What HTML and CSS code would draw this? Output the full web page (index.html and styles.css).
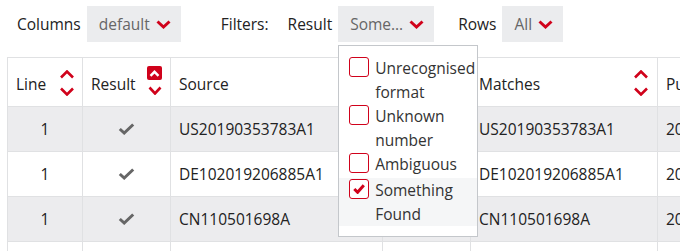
FILE: index.html
```html
<!DOCTYPE html>
<html lang="en">
  <head>
    <meta charset="UTF-8" />
    <meta name="viewport" content="width=device-width, initial-scale=1.0" />
    <title>Results</title>
    <link rel="stylesheet" href="styles.css">
  </head>
  <body>
    <div class="toolbar">
      <div class="group">
        <span class="label">Columns</span>
        <button class="select">default
          <svg class="chev" width="15" height="9" viewBox="0 0 15 9"><path d="M1.5 1.5 L7.5 7 L13.5 1.5" /></svg>
        </button>
      </div>

      <span class="label filters">Filters:</span>

      <div class="group result-filter">
        <span class="label">Result</span>
        <div class="dropdown">
          <button class="select">Some…
            <svg class="chev" width="15" height="9" viewBox="0 0 15 9"><path d="M1.5 1.5 L7.5 7 L13.5 1.5" /></svg>
          </button>
          <div class="menu">
            <label class="option">
              <span class="box"></span>
              <span>Unrecognised format</span>
            </label>
            <label class="option">
              <span class="box"></span>
              <span>Unknown number</span>
            </label>
            <label class="option">
              <span class="box"></span>
              <span>Ambiguous</span>
            </label>
            <label class="option hover">
              <span class="box">
                <svg width="12" height="10" viewBox="0 0 12 10"><path d="M1.3 5 L4.6 8.3 L10.8 1.3" /></svg>
              </span>
              <span>Something Found</span>
            </label>
          </div>
        </div>
      </div>

      <div class="group rows">
        <span class="label">Rows</span>
        <button class="select">All
          <svg class="chev" width="15" height="9" viewBox="0 0 15 9"><path d="M1.5 1.5 L7.5 7 L13.5 1.5" /></svg>
        </button>
      </div>
    </div>

    <table class="results">
      <colgroup>
        <col class="c-line" />
        <col class="c-result" />
        <col class="c-source" />
        <col class="c-type" />
        <col class="c-matches" />
        <col class="c-pub" />
      </colgroup>
      <thead>
        <tr>
          <th>
            <div class="head">Line
              <span class="sort">
                <svg width="16" height="9" viewBox="0 0 16 9"><path d="M2 7.5 L8 1.5 L14 7.5" /></svg>
                <svg width="16" height="9" viewBox="0 0 16 9"><path d="M2 1.5 L8 7.5 L14 1.5" /></svg>
              </span>
            </div>
          </th>
          <th>
            <div class="head">Result
              <span class="sort active">
                <span class="on"><svg width="11" height="7" viewBox="0 0 11 7"><path d="M1.5 5.8 L5.5 1.8 L9.5 5.8" /></svg></span>
                <svg width="14" height="9" viewBox="0 0 14 9"><path d="M1.5 1.5 L7 7.5 L12.5 1.5" /></svg>
              </span>
            </div>
          </th>
          <th><div class="head">Source</div></th>
          <th></th>
          <th>
            <div class="head">Matches
              <span class="sort">
                <svg width="16" height="9" viewBox="0 0 16 9"><path d="M2 7.5 L8 1.5 L14 7.5" /></svg>
                <svg width="16" height="9" viewBox="0 0 16 9"><path d="M2 1.5 L8 7.5 L14 1.5" /></svg>
              </span>
            </div>
          </th>
          <th><div class="head">Publication date</div></th>
        </tr>
      </thead>
      <tbody>
        <tr>
          <td class="num">1</td>
          <td class="ok"><svg width="17" height="12" viewBox="0 0 17 12"><path d="M1.8 6 L6.2 10 L15.2 1.5" /></svg></td>
          <td>US20190353783A1</td>
          <td></td>
          <td>US20190353783A1</td>
          <td>2019-11-21</td>
        </tr>
        <tr>
          <td class="num">1</td>
          <td class="ok"><svg width="17" height="12" viewBox="0 0 17 12"><path d="M1.8 6 L6.2 10 L15.2 1.5" /></svg></td>
          <td>DE102019206885A1</td>
          <td></td>
          <td>DE102019206885A1</td>
          <td>2019-11-21</td>
        </tr>
        <tr>
          <td class="num">1</td>
          <td class="ok"><svg width="17" height="12" viewBox="0 0 17 12"><path d="M1.8 6 L6.2 10 L15.2 1.5" /></svg></td>
          <td>CN110501698A</td>
          <td></td>
          <td>CN110501698A</td>
          <td>2019-11-26</td>
        </tr>
        <tr>
          <td class="num">2</td>
          <td class="ok"><svg width="17" height="12" viewBox="0 0 17 12"><path d="M1.8 6 L6.2 10 L15.2 1.5" /></svg></td>
          <td>EP3570291A1</td>
          <td></td>
          <td>EP3570291A1</td>
          <td>2019-11-20</td>
        </tr>
      </tbody>
    </table>
  </body>
</html>
```

FILE: styles.css
```css
html {
  overflow: hidden;
}
body {
  margin: 0;
  font-family: "Open Sans", Arial, sans-serif;
  font-size: 15.5px;
  color: #222;
  background: white;
}
.toolbar {
  display: flex;
  align-items: center;
  padding: 6px 0 0 17px;
  height: 36px;
}
.group {
  display: flex;
  align-items: center;
  gap: 6px;
}
.filters {
  margin-left: 40px;
}
.result-filter {
  margin-left: 19px;
}
.rows {
  margin-left: 24px;
}
.select {
  display: flex;
  align-items: center;
  gap: 6px;
  height: 36px;
  padding: 0 10px 0 12px;
  border: none;
  border-radius: 0;
  background-color: #ebecee;
  color: #666;
  font: inherit;
  cursor: pointer;
}
.chev path {
  fill: none;
  stroke: #d0021b;
  stroke-width: 3;
}
.dropdown {
  position: relative;
}
.menu {
  position: absolute;
  top: calc(100% + 3px);
  left: 0;
  width: 140px;
  box-sizing: border-box;
  padding: 10px 0;
  background: white;
  border: 1px solid #c4c7cb;
  z-index: 10;
}
.option {
  display: flex;
  gap: 6px;
  min-height: 26px;
  padding: 0 4px 0 10px;
  line-height: 24px;
  color: #333;
}
.option.hover {
  background-color: #f5f6f7;
}
.box {
  flex: none;
  display: flex;
  align-items: center;
  justify-content: center;
  width: 20px;
  height: 20px;
  margin-top: 1px;
  box-sizing: border-box;
  border: 1.5px solid #d0021b;
  border-radius: 3px;
  background: white;
}
.box path {
  fill: none;
  stroke: #d0021b;
  stroke-width: 3;
}
.results {
  margin: 15px 0 0 7px;
  border-collapse: collapse;
  table-layout: fixed;
  width: 850px;
}
.c-line { width: 75px; }
.c-result { width: 88px; }
.c-source { width: 212px; }
.c-type { width: 88px; }
.c-matches { width: 187px; }
.c-pub { width: 200px; }
.results th,
.results td {
  border: 1px solid #e0e1e3;
  padding: 0 8px;
  text-align: left;
  white-space: nowrap;
  overflow: hidden;
}
.results th {
  height: 48px;
  font-weight: normal;
}
.head {
  display: flex;
  align-items: center;
  justify-content: space-between;
  padding-top: 3px;
}
.results th:first-child .head {
  margin-right: -1px;
}
.sort {
  display: flex;
  flex-direction: column;
  align-items: center;
  gap: 8px;
  margin-top: -2px;
}
.sort path {
  fill: none;
  stroke: #d0021b;
  stroke-width: 2.6;
}
.sort.active {
  gap: 6px;
  margin-top: -6px;
}
.sort .on {
  display: flex;
  align-items: center;
  justify-content: center;
  width: 15px;
  height: 14px;
  border-radius: 2px;
  background-color: #d0021b;
}
.sort .on path {
  stroke: white;
  stroke-width: 2.4;
}
.results td {
  height: 44px;
}
.results tbody tr:nth-child(odd) {
  background-color: #ececee;
}
.results td.num,
.results td.ok {
  text-align: center;
}
.ok svg {
  display: block;
  margin: 0 auto;
}
.ok path {
  fill: none;
  stroke: #666;
  stroke-width: 3;
}
```
